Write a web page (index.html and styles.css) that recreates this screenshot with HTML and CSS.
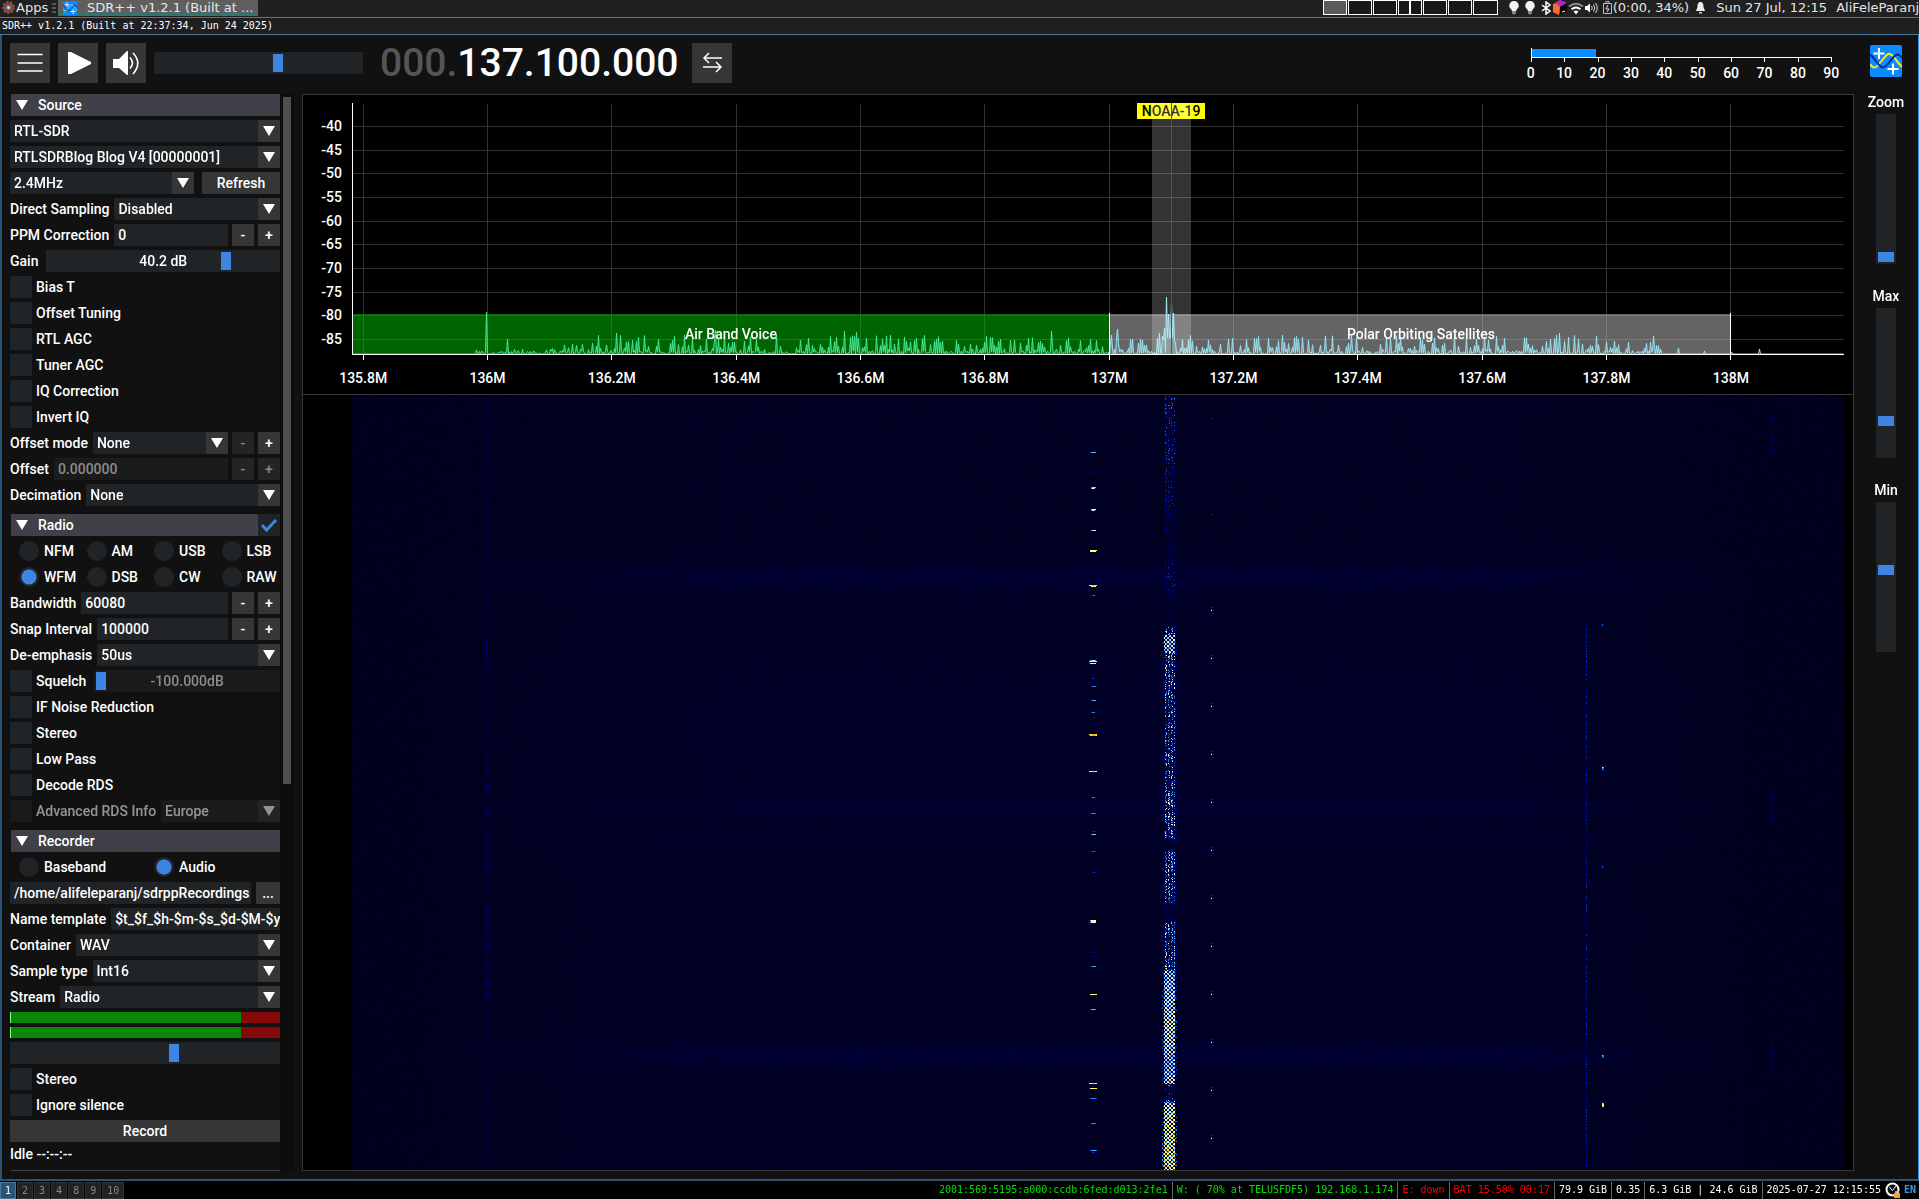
FILE: index.html
```html
<!DOCTYPE html>
<html lang="en">
<head>
<meta charset="utf-8">
<title>SDR++ v1.2.1</title>
<link rel="stylesheet" href="styles.css">
</head>
<body>
<svg class="defs" width="0" height="0" aria-hidden="true">
  <symbol id="sdrpp" viewBox="0 0 32 32">
    <rect width="32" height="32" rx="2" fill="#0a8bff"/>
    <path d="M0 19C2 22 4 23.500 6 22C10 19 14 12 18 9C22 7.500 26 16 32 22" fill="none" stroke="#ffe81a" stroke-width="2"/>
    <path d="M0 10C4 11 8 22 13 22.500C18 22 22 11 27 9.500Q30 9.500 32 13" fill="none" stroke="#0b2a8c" stroke-width="2"/>
    <path d="M9 3v11M3.500 8.500h11M23 18.500v11M17.500 24h11" stroke="#fff" stroke-width="2"/>
  </symbol>
  <symbol id="bulb" viewBox="0 0 12 15">
    <path d="M6 1a4.500 4.500 0 0 0-3 8l1 2h4l1-2a4.500 4.500 0 0 0-3-8z" fill="#f4f4f4"/>
    <path d="M4 11h4v2l-1 1.500H5L4 13z" fill="#8a8a8a"/>
  </symbol>
</svg>

<header class="panel">
  <button class="apps"><svg width="13" height="13" viewBox="0 0 13 13"><circle cx="6.500" cy="6.500" r="4" fill="#4a6f9a" stroke="#8a4a30" stroke-width="2.500"/><circle cx="6.500" cy="6.500" r="5.700" fill="none" stroke="#a05a3c" stroke-width="1.500" stroke-dasharray="2 2"/><circle cx="6.500" cy="6.500" r="1.500" fill="#cfe0f0"/></svg>Apps</button>
  <svg class="grip" width="4" height="10" viewBox="0 0 4 10"><path d="M0 1h4M0 5h4M0 9h4" stroke="#8c8c8c"/></svg>
  <button class="task"><svg width="16" height="14" preserveAspectRatio="none"><use href="#sdrpp" width="16" height="14"/></svg><span>SDR++ v1.2.1 (Built at ...</span></button>
  <div class="pager"><i class="on"></i><i></i><i></i><i class="split"></i><i></i><i></i><i class="wide"></i></div>
  <div class="tray">
    <svg width="15" height="15"><use href="#bulb" width="12" height="15"/></svg>
    <svg width="15" height="15"><use href="#bulb" width="12" height="15"/></svg>
    <svg width="12" height="14" viewBox="0 0 12 14"><path d="M2 4l8 6-4 3V1l4 3-8 6" fill="none" stroke="#fff" stroke-width="1.500"/></svg>
    <svg width="14" height="15" viewBox="0 0 14 15"><path d="M0 4L7 0l7 3-7 3-1 9-6-3z" fill="#f0323c"/><path d="M7 0l7 3-7 4-3-3z" fill="#b020e0"/><path d="M0 4l4 0 3 3-1 8-6-3z" fill="#ff6a2a"/><path d="M7 7l7-4v8l-7 4z" fill="#050505"/><path d="M9 12l3-1" stroke="#fff"/></svg>
    <svg width="16" height="14" viewBox="0 0 16 14"><path d="M1 5.500q7-5.500 14 0" fill="none" stroke="#8a8a8a" stroke-width="1.800"/><path d="M3.500 8.300q4.500-3.500 9 0" fill="none" stroke="#fff" stroke-width="1.800"/><path d="M5.500 10.500q2.500-2 5 0L8 13.500z" fill="#fff"/></svg>
    <svg width="13" height="14" viewBox="0 0 13 14"><path d="M0 5h2l3-2.500v9L2 9H0z" fill="#fff"/><path d="M6.500 5q1.500 2 0 4M8.500 3.500q2.500 3.500 0 7M10.500 2q3.500 5 0 10" fill="none" stroke="#ddd"/></svg>
    <svg class="battery" width="9" height="13" viewBox="0 0 9 13"><path d="M3 2V.5h3V2M.5 2.500h8v10h-8z" fill="none" stroke="#bbb"/><path d="M5 4L3 8h3l-2 3" fill="none" stroke="#ddd"/></svg>
    <span>(0:00, 34%)</span>
    <svg class="bell" width="11" height="13" viewBox="0 0 11 13"><path d="M5.500 1C3 1 2.500 3.500 2.500 6L1 10h9L8.500 6c0-2.500-.5-5-3-5z" fill="#eee"/><path d="M4 11h3v1.500H4z" fill="#ccc"/></svg>
    <span class="clock">Sun 27 Jul, 12:15</span>
    <span class="user">AliFeleParanj</span>
  </div>
</header>
<div class="titlebar">SDR++ v1.2.1 (Built at 22:37:34, Jun 24 2025)</div>

<main class="app">
  <div class="toolbar">
    <button class="tool" aria-label="Menu"><svg width="40" height="40" viewBox="0 0 40 40"><path d="M7.500 11.500h25M7.500 20h25M7.500 28h25" stroke="#fff" stroke-width="1.600"/></svg></button>
    <button class="tool" aria-label="Play"><svg width="40" height="40" viewBox="0 0 40 40"><path d="M10 9h3l20 10v2L13 31h-3z" fill="#fff"/></svg></button>
    <button class="tool" aria-label="Volume"><svg width="40" height="40" viewBox="0 0 40 40"><path d="M7 16h6l8-8h1v24h-1l-8-7H7z" fill="#fff"/><path d="M24 14.500q5 5.500 0 11M27 10q9.500 10 0 21" fill="none" stroke="#fff" stroke-width="1.600"/></svg></button>
    <input class="range volume" type="range" min="0" max="100" value="60" aria-label="Volume">
    <div class="freq"><span>000.</span>137.100.000</div>
    <button class="tool" aria-label="Tuning mode"><svg width="40" height="40" viewBox="0 0 40 40"><path d="M30 15H12M17 10l-5 5 5 5M11 24h18M24 19l5 5-5 5" fill="none" stroke="#fff" stroke-width="1.500"/></svg></button>
    <div class="smeter">
      <svg width="301" height="14" viewBox="0 0 301 14" shape-rendering="crispEdges"><path d="M0 1h65v8H0z" fill="#0a8bff"/><path d="M.5 0v14M0 9.500h301M33.500 9v5M67.500 9v5M100.500 9v5M133.500 9v5M167.500 9v5M200.500 9v5M233.500 9v5M267.500 9v5M300.500 9v5" fill="none" stroke="#fff"/></svg>
      <div class="smeter-scale"><span>0</span><span>10</span><span>20</span><span>30</span><span>40</span><span>50</span><span>60</span><span>70</span><span>80</span><span>90</span></div>
    </div>
    <svg class="logo" width="32" height="32"><use href="#sdrpp" width="32" height="32"/></svg>
  </div>

  <div class="body">
    <aside class="side">
      <div class="menu">
        <button class="head"><i class="tri"></i>Source</button>
        <div class="row"><div class="combo"><select aria-label="Source"><option>RTL-SDR</option></select></div></div>
        <div class="row"><div class="combo"><select aria-label="Device"><option>RTLSDRBlog Blog V4 [00000001]</option></select></div></div>
        <div class="row wide"><div class="combo"><select aria-label="Sample rate"><option>2.4MHz</option></select></div><button class="btn refresh">Refresh</button></div>
        <div class="row"><label for="ds">Direct Sampling</label><div class="combo"><select id="ds"><option>Disabled</option></select></div></div>
        <div class="row"><label for="ppm">PPM Correction</label><div class="spin"><input id="ppm" type="text" value="0"><button class="btn">-</button><button class="btn">+</button></div></div>
        <div class="row wide"><label for="gain">Gain</label><div class="slide"><input id="gain" class="range" type="range" min="0" max="1000" value="786"><output for="gain">40.2 dB</output></div></div>
        <label class="check"><input type="checkbox">Bias T</label>
        <label class="check"><input type="checkbox">Offset Tuning</label>
        <label class="check"><input type="checkbox">RTL AGC</label>
        <label class="check"><input type="checkbox">Tuner AGC</label>
        <label class="check"><input type="checkbox">IQ Correction</label>
        <label class="check"><input type="checkbox">Invert IQ</label>
        <div class="row"><label for="om">Offset mode</label><div class="spin"><div class="combo"><select id="om"><option>None</option></select></div><button class="btn" disabled>-</button><button class="btn">+</button></div></div>
        <div class="row"><label for="off">Offset</label><div class="spin"><input id="off" type="text" value="0.000000" disabled><button class="btn" disabled>-</button><button class="btn" disabled>+</button></div></div>
        <div class="row"><label for="dec">Decimation</label><div class="combo"><select id="dec"><option>None</option></select></div></div>

        <div class="head-row"><button class="head"><i class="tri"></i>Radio</button><label class="enable"><input type="checkbox" checked aria-label="Enable Radio"><svg width="22" height="22" viewBox="0 0 22 22"><path d="M4 11l4.500 5L18 6" fill="none" stroke="#3d85e0" stroke-width="3"/></svg></label></div>
        <div class="radios four">
          <label><input type="radio" name="mode">NFM</label><label><input type="radio" name="mode">AM</label><label><input type="radio" name="mode">USB</label><label><input type="radio" name="mode">LSB</label>
          <label><input type="radio" name="mode" checked>WFM</label><label><input type="radio" name="mode">DSB</label><label><input type="radio" name="mode">CW</label><label><input type="radio" name="mode">RAW</label>
        </div>
        <div class="row"><label for="bw">Bandwidth</label><div class="spin"><input id="bw" type="text" value="60080"><button class="btn">-</button><button class="btn">+</button></div></div>
        <div class="row"><label for="snap">Snap Interval</label><div class="spin"><input id="snap" type="text" value="100000"><button class="btn">-</button><button class="btn">+</button></div></div>
        <div class="row"><label for="de">De-emphasis</label><div class="combo"><select id="de"><option>50us</option></select></div></div>
        <div class="row wide"><label class="check"><input type="checkbox">Squelch</label><div class="slide off"><input class="range" type="range" min="-100" max="0" value="-100" aria-label="Squelch level"><output>-100.000dB</output></div></div>
        <label class="check"><input type="checkbox">IF Noise Reduction</label>
        <label class="check"><input type="checkbox">Stereo</label>
        <label class="check"><input type="checkbox">Low Pass</label>
        <label class="check"><input type="checkbox">Decode RDS</label>
        <div class="row dim"><label class="check"><input type="checkbox" disabled>Advanced RDS Info</label><div class="combo"><select aria-label="RDS region" disabled><option>Europe</option></select></div></div>

        <div class="head-row"><button class="head"><i class="tri"></i>Recorder</button></div>
        <div class="radios two"><label><input type="radio" name="rec">Baseband</label><label><input type="radio" name="rec" checked>Audio</label></div>
        <div class="row"><input type="text" value="/home/alifeleparanj/sdrppRecordings" aria-label="Recording folder"><button class="btn browse">...</button></div>
        <div class="row"><label for="tpl">Name template</label><input id="tpl" type="text" value="$t_$f_$h-$m-$s_$d-$M-$y"></div>
        <div class="row"><label for="con">Container</label><div class="combo"><select id="con"><option>WAV</option></select></div></div>
        <div class="row"><label for="st">Sample type</label><div class="combo"><select id="st"><option>Int16</option></select></div></div>
        <div class="row"><label for="str">Stream</label><div class="combo"><select id="str"><option>Radio</option></select></div></div>
        <div class="level"></div>
        <div class="level"></div>
        <input class="range" type="range" min="0" max="1000" value="613" aria-label="Recording volume">
        <label class="check"><input type="checkbox">Stereo</label>
        <label class="check"><input type="checkbox">Ignore silence</label>
        <button class="btn record">Record</button>
        <div class="status">Idle --:--:--</div>
        <div class="head-row"><button class="head" aria-label="Next section"></button></div>
      </div>
      <div class="scroll"><div class="thumb"></div></div>
    </aside>

    <section class="view">
      <div class="fft">
        <div class="ylabels"><span>-40</span><span>-45</span><span>-50</span><span>-55</span><span>-60</span><span>-65</span><span>-70</span><span>-75</span><span>-80</span><span>-85</span></div>
        <div class="plot">
          <canvas id="fft"></canvas>
          <span class="band air">Air Band Voice</span>
          <span class="band polar">Polar Orbiting Satellites</span>
          <span class="tag">NOAA-19</span>
          <div class="vfo"></div>
        </div>
      </div>
      <div class="xlabels"><span>135.8M</span><span>136M</span><span>136.2M</span><span>136.4M</span><span>136.6M</span><span>136.8M</span><span>137M</span><span>137.2M</span><span>137.4M</span><span>137.6M</span><span>137.8M</span><span>138M</span></div>
      <div class="fall"><canvas id="fall"></canvas></div>
    </section>

    <div class="levels">
      <label>Zoom<input class="vrange" type="range" min="0" max="100" value="0"></label>
      <label>Max<input class="vrange" type="range" min="0" max="100" value="22"></label>
      <label>Min<input class="vrange" type="range" min="0" max="100" value="55"></label>
    </div>
  </div>
</main>

<footer class="bar">
  <nav><button class="cur">1</button><button>2</button><button>3</button><button>4</button><button>8</button><button>9</button><button>10</button></nav>
  <div class="stat">
    <span class="ok">2001:569:5195:a000:ccdb:6fed:d013:2fe1</span><span class="ok">W: ( 70% at TELUSFDF5) 192.168.1.174</span><span class="bad">E: down</span><span class="bad">BAT 15.50% 00:17</span><span>79.9 GiB</span><span>0.35</span><span>6.3 GiB | 24.6 GiB</span><span>2025-07-27 12:15:55</span>
    <svg width="16" height="17" viewBox="0 0 16 17"><circle cx="7.500" cy="7.500" r="6" fill="#111" stroke="#fff" stroke-width="2"/><path d="M4.500 5l3 3.500L11 4" fill="none" stroke="#fff"/><path d="M9 11h6v5H9z" fill="#f5a623"/><path d="M10.500 11V9.500h3V11" fill="none" stroke="#f5a623"/></svg>
    <b>EN</b>
  </div>
</footer>
<script src="charts.js"></script>
</body>
</html>
```
FILE: styles.css
```css
* { box-sizing: border-box; }

body {
  margin: 0;
  height: 100vh;
  display: flex;
  flex-direction: column;
  overflow: hidden;
  background: #000;
  color: #fff;
  font: 500 14px/16px Roboto, sans-serif;
}

button, input, select { font: inherit; color: inherit; margin: 0; border: 0; border-radius: 0; }
button { padding: 0; }
.defs { position: absolute; }
svg { display: block; flex: none; }

/* desktop panel */
.panel {
  display: flex;
  align-items: flex-start;
  flex: none;
  height: 17px;
  background: #202020;
  font: 13px/15px "DejaVu Sans", sans-serif;
  color: #e6e6e6;
  white-space: nowrap;
}
.apps { display: flex; align-items: center; gap: 1px; padding-left: 2px; width: 52px; height: 15px; background: none; }
.grip { margin: 3px 2px 0 0; }
.task { display: flex; gap: 9px; width: 200px; height: 16px; padding: 1px 4px 0; background: #5f5f5f; border-bottom: 2px solid #2b7a72; line-height: 13px; }
.pager { display: flex; gap: 1px; margin-left: auto; margin-right: 10px; }
.pager i { width: 24px; height: 15px; border: 1px solid #fff; background: #181818; }
.pager .on { background: #5a5a5a; }
.pager .wide { width: 25px; }
.pager .split { background: linear-gradient(90deg, #181818 10px, #fff 10px 12px, #181818 12px); }
.tray { display: flex; align-items: center; gap: 1px; height: 15px; }
.battery { margin-left: 4px; }
.bell { margin: 0 9px 0 5px; }
.user { margin-left: 8px; }

.titlebar {
  flex: none;
  height: 18px;
  padding-left: 2px;
  border-top: 1px solid #4c7899;
  border-bottom: 1px solid #4c7899;
  background: #1f1f1f;
  font: 10px/15px "DejaVu Sans Mono", monospace;
}

/* application window */
.app {
  flex: 1;
  min-height: 0;
  display: flex;
  flex-direction: column;
  background: #111;
  border: solid #285577;
  border-width: 0 0 2px 2px;
  border-right: 1px solid #2e8fe0;
}
.toolbar { display: flex; align-items: flex-start; flex: none; gap: 8px; height: 59px; padding: 8px 16px 0 8px; }
.tool { width: 40px; height: 40px; background: #363636; }
.volume { width: 209px; margin-top: 9px; }
.freq { margin: 0 8px 0 9px; width: 296px; font-size: 39px; line-height: 40px; white-space: nowrap; }
.freq span { color: #555; }
.smeter { width: 334px; margin: 5px 14px 0 auto; }
.smeter svg { margin-left: 17px; }
.smeter-scale { display: grid; grid-template-columns: repeat(10, 1fr); margin-top: 3px; text-align: center; }
.logo { margin-top: 2px; }

.body { flex: 1; min-height: 0; display: flex; padding-bottom: 8px; }

/* side menu */
.side { display: flex; flex: none; width: 292px; overflow: hidden; }
.menu { display: flex; flex-direction: column; gap: 4px; width: 278px; padding-left: 8px; }
.menu > * { flex: none; }
.scroll { flex: 1; padding: 3px; background: #0c0c0c; }
.thumb { width: 8px; height: 687px; background: #4f4f4f; }

.head { display: flex; align-items: center; gap: 10px; flex: 1; height: 22px; margin-left: 1px; padding-left: 5px; background: #404048; text-align: left; }
.menu > .head { flex: none; }
.head-row { display: flex; height: 22px; margin-top: 4px; }
.tri { width: 12px; height: 10px; background: #fff; clip-path: polygon(0 0, 100% 0, 50% 100%); }
.enable { width: 22px; height: 22px; background: #212426; }
.enable input { position: absolute; opacity: 0; }

.row { display: flex; gap: 5px; height: 22px; align-items: center; }
.row.wide { gap: 8px; }
.row > label { white-space: nowrap; }
.combo { position: relative; flex: 1; min-width: 0; height: 22px; }
.combo::after {
  content: "";
  position: absolute;
  right: 5px;
  top: 6px;
  width: 12px;
  height: 10px;
  background: #fff;
  clip-path: polygon(0 0, 100% 0, 50% 100%);
  pointer-events: none;
}
select {
  appearance: none;
  width: 100%;
  height: 22px;
  padding: 0 22px 0 4px;
  background: linear-gradient(#363636, #363636) right / 22px 22px no-repeat #212426;
}
input[type="text"] { flex: 1; min-width: 0; width: 0; height: 22px; padding: 0 0 0 4px; background: #212426; }
.spin { display: flex; flex: 1; min-width: 0; gap: 4px; }
.btn { height: 22px; background: #363636; text-align: center; }
.spin .btn { width: 22px; }
.refresh { width: 78px; }
.browse { width: 24px; }
.spin input:disabled { background: #191b1c; color: #8c8c8c; opacity: 1; }
.btn:disabled { background: #242424; color: #8c8c8c; }

.check { display: flex; align-items: center; gap: 4px; height: 22px; }
.check input { appearance: none; width: 22px; height: 22px; background: #212426; }
.dim { opacity: .55; }
.dim select, .dim input { opacity: 1; color: #fff; }

.radios { display: grid; row-gap: 4px; }
.four { grid-template-columns: repeat(4, 1fr); }
.two { grid-template-columns: repeat(2, 1fr); }
.radios label { display: flex; align-items: center; gap: 5px; height: 22px; padding-left: 9px; }
.radios input { appearance: none; flex: none; width: 20px; height: 20px; border-radius: 50%; background: #212426; }
.radios input:checked { background: radial-gradient(circle, #3d85e0 7px, #212426 8px); }

.range { appearance: none; display: block; height: 22px; padding: 0 2px; background: #212426; }
.range::-webkit-slider-thumb { appearance: none; width: 10px; height: 18px; background: #3d85e0; }
.slide { position: relative; flex: 1; min-width: 0; height: 22px; }
.slide .range { width: 100%; }
.slide output { position: absolute; inset: 3px 0 0; text-align: center; pointer-events: none; }
.off .range { background: #191b1c; }
.off output { color: #8c8c8c; }
.level { height: 11px; background: linear-gradient(90deg, #8f8 1px, #0a880a 1px 231px, #870a0a 231px); }

/* spectrum and waterfall */
.view { flex: 1; min-width: 0; display: flex; flex-direction: column; margin: 0 0 0 8px; border: 1px solid #383838; background: #000; }
.fft { display: flex; flex: none; height: 266px; padding: 8px 9px 0 0; }
.ylabels { display: grid; grid-template-rows: repeat(10, 1fr); align-items: center; width: 49px; height: 237px; margin-top: 11px; padding-right: 10px; text-align: right; }
.plot { position: relative; flex: 1; min-width: 0; }
canvas { display: block; width: 100%; height: 100%; }
.band { position: absolute; top: 223px; text-align: center; }
.air { left: 0; width: 50.8%; }
.polar { left: 50.8%; width: 41.7%; }
.tag { position: absolute; left: calc(54.9% - 34px); top: 0; width: 68px; background: #ff0; color: #000; text-align: center; }
.vfo { position: absolute; left: 53.6%; top: 0; width: 39px; height: 251px; background: linear-gradient(90deg, transparent 19px, #e01818 19px 20px, transparent 20px), rgba(255, 255, 255, .2); }
.xlabels { display: grid; grid-template-columns: repeat(12, 1fr); flex: none; height: 33px; margin: 0 60px 0 -2px; padding-top: 9px; text-align: center; }
.fall { flex: 1; min-height: 0; padding: 0 9px 0 49px; border-top: 1px solid #383838; }

.levels { display: flex; flex-direction: column; gap: 24px; flex: none; width: 64px; }
.levels label { display: flex; flex-direction: column; align-items: center; gap: 4px; }
.vrange { appearance: none; writing-mode: vertical-lr; direction: rtl; width: 20px; height: 150px; padding: 2px 0; background: #212426; }
.vrange::-webkit-slider-thumb { appearance: none; width: 16px; height: 10px; background: #3d85e0; }

/* workspace bar */
.bar { display: flex; flex: none; height: 18px; padding-top: 1px; background: #000; font: 10px/16px "DejaVu Sans Mono", monospace; }
.bar nav { display: flex; gap: 1px; }
.bar button { min-width: 16px; height: 17px; padding: 0 4px; border: 1px solid #333; background: #222; color: #888; line-height: 15px; }
.bar .cur { border-color: #4c7899; background: #285577; color: #fff; }
.stat { display: flex; margin-left: auto; padding-right: 3px; white-space: pre; }
.stat span + span { margin-left: 4px; padding-left: 4px; border-left: 1px solid #666; }
.stat svg { margin: 0 3px 0 4px; }
.ok { color: #00e000; }
.bad { color: #f00; }
.stat b { color: #3d9be0; font: bold 10px/16px "DejaVu Sans Mono", monospace; }
```
FILE: charts.js
```js
const SPAN = 1492; // reference bin count across 2.4 MHz
let seed = 7;
const rnd = () => {
  seed = (seed * 1664525 + 1013904223) >>> 0;
  return seed / 4294967296;
};

function prepare(id) {
  const c = document.getElementById(id);
  const r = c.getBoundingClientRect();
  c.width = Math.round(r.width);
  c.height = Math.round(r.height);
  return [c.getContext('2d'), c.width, c.height];
}

function drawSpectrum() {
  seed = 11;
  const [g, w, h] = prepare('fft');
  const base = 251;
  const k = w / SPAN;
  const fx = f => Math.round((f - 135.7828) / 2.4 * w);
  const band = (a, b, col) => { g.fillStyle = col; g.fillRect(a, base - 40, b - a, 40); };
  const m137 = fx(137), m138 = fx(138);
  band(0, m137, '#006400');
  band(m137, m138, '#646464');
  const grid = (x, y, ww, hh, inBand) => {
    g.fillStyle = inBand || '#323232';
    g.fillRect(x, y, ww, hh);
  };
  for (let i = 0; i < 12; i++) {
    const x = fx(135.8 + i * 0.2);
    grid(x, 1, 1, base - 41);
    grid(x, base - 40, 1, 40, x < m137 ? '#1e781e' : '#7c7c7c');
    g.fillStyle = '#fff';
    g.fillRect(x, base, 1, 6);
  }
  for (let i = 0; i < 10; i++) {
    const y = Math.round(23 + i * 23.65);
    grid(0, y, w, 1);
    if (y > base - 40) {
      grid(0, y, m137, 1, '#1e781e');
      grid(m137, y, m138 - m137, 1, '#7c7c7c');
    }
  }
  const env = x => {
    if (x < 120) return 0;
    if (x < 180) return 7;
    if (x < 240) return 13;
    if (x < 1270) return 21;
    if (x < 1312) return 14;
    return 0;
  };
  const spikes = { 135: 42, 156: 15, 265: 21, 364: 24, 493: 23, 505: 22, 700: 23, 760: 19, 766: 25, 812: 14, 806: 16, 808: 21, 811: 18, 813: 26, 815: 57, 817: 40, 820: 53, 822: 41, 824: 12, 974: 18, 1000: 19, 1208: 21, 1302: 18, 1327: 6, 1353: 3, 1380: 2, 1408: 5 };
  const ys = [];
  for (let x = 0; x < SPAN; x++) {
    let v = x % 2 ? Math.pow(rnd(), 1.7) * env(x) - 2 : rnd() * 4 - 1;
    if (!env(x)) v = 0;
    if (x >= 816 && x <= 821 && !spikes[x]) v = 16;
    if (spikes[x]) v = spikes[x];
    ys.push(Math.max(0, v));
  }
  const trace = (a, b, line, fill) => {
    g.beginPath();
    g.moveTo(a * k, base);
    for (let x = a; x <= b; x++) g.lineTo(Math.max(0, x * k - 0.5), base - ys[x]);
    g.lineTo(b * k, base);
    g.fillStyle = fill;
    g.fill();
    g.strokeStyle = line;
    g.lineWidth = 1;
    g.stroke();
  };
  trace(0, 757, '#45e896', 'rgba(60,200,120,.25)');
  trace(757, SPAN - 1, '#9ae4f2', 'rgba(150,225,240,.25)');
  g.fillStyle = '#fff';
  g.fillRect(0, 0, 1, base);
  g.fillRect(m137, base - 41, 1, 41);
  g.fillRect(m138, base - 41, 1, 41);
  g.fillRect(0, base, w, 1);
}

const MAP = [[0, 0, 32], [0, 0, 48], [0, 0, 80], [0, 0, 145], [30, 144, 255], [255, 255, 255], [255, 255, 0], [254, 109, 22]];
function shade(v) {
  v = Math.max(0, Math.min(0.999, v)) * (MAP.length - 1);
  const i = Math.floor(v), t = v - i;
  return MAP[i].map((c, n) => Math.round(c + (MAP[i + 1][n] - c) * t));
}

// signal strength of the satellite downlink by waterfall row
const PASS = [[0, .48], [60, .46], [110, .4], [150, .34], [185, .44], [196, .42], [206, .14], [226, .14], [232, .56], [240, .66], [252, .7], [262, .62], [330, .58], [390, .6], [410, .62], [440, .64], [446, .3], [453, .3], [457, .62], [505, .58], [512, .32], [523, .32], [528, .6], [560, .62], [580, .67], [620, .76], [650, .74], [660, .66], [688, .7], [692, .4], [702, .45], [708, .7], [718, .8], [775, .84]];
function passAt(y) {
  for (let i = 1; i < PASS.length; i++) {
    if (y <= PASS[i][0]) {
      const [a, u] = PASS[i - 1], [b, v] = PASS[i];
      return u + (v - u) * (y - a) / (b - a);
    }
  }
  return .84;
}

function drawWaterfall() {
  seed = 5;
  const [g, w, h] = prepare('fall');
  const k = w / SPAN;
  const img = g.createImageData(w, h);
  const put = (x, y, v) => {
    x = Math.round(x); y = Math.round(y);
    if (x < 0 || y < 0 || x >= w || y >= h) return;
    const c = shade(v), o = (y * w + x) * 4;
    img.data[o] = c[0]; img.data[o + 1] = c[1]; img.data[o + 2] = c[2]; img.data[o + 3] = 255;
  };
  const bump = (y, c, s) => Math.exp(-((y - c) * (y - c)) / (2 * s * s));
  for (let y = 0; y < h; y++) {
    const glow = .55 * bump(y, 182, 10) + .55 * bump(y, 660, 9) + .14 * bump(y, 340, 50) + .3 * bump(y, 412, 7) + .2 * bump(y, 445, 6) + (y > 200 ? .1 : 0);
    for (let x = 0; x < w; x++) {
      const q = x / k;
      const hump = Math.max(0, Math.min(1, (q - 60) / 350)) * Math.max(0, Math.min(1, (1400 - q) / 250));
      const n = rnd();
      const b = 29 + (glow * 32 + 3) * hump * (.4 + n) + n * 3;
      const o = (y * w + x) * 4;
      img.data[o + 2] = b; img.data[o + 3] = 255;
    }
    const on = (y > 240 && y < 270) || (y > 350 && y < 480) || (y > 510 && y < 600);
    if (rnd() > .5) put(134 * k, y, on ? .42 : .26);
    if (y > 225 && rnd() > .2) put(1234 * k, y, .25 + .25 * rnd());
    if (y > 225 && rnd() > .7) { put(1231 * k, y, .22); put(1237 * k, y, .22); }
    const late = (y > 20 && y < 60) || (y > 395 && y < 430) || (y > 640 && y < 680);
    if (late && rnd() > .4) put(1420 * k, y, .36);
    const p = passAt(y);
    const cx = Math.round(817 * k);
    for (let d = -7; d <= 7; d++) {
      const inner = d >= -5 && d <= 5;
      const stripe = [-4, -3, -1, 0, 2, 3, 5].includes(d);
      const check = ((Math.floor(y / 2) + Math.floor((d + 8) / 2)) & 1) === 0;
      const n = rnd();
      let v = 0;
      if (p > .655 && inner) v = check ? p * (.85 + .25 * n) : n > .7 ? p * .7 : .1;
      else if (stripe) v = n > (p > .5 ? .38 : .6) ? p * (.45 + .75 * rnd()) : .12;
      else if (Math.abs(d) >= 6 && check && p > .5 && n > .6) v = p * .7;
      if (v > .08) put(cx + d, y, v);
    }
  }
  const dash = (y, n, v) => { for (let i = 0; i < n; i++) put((741 * k) + i - n / 2, y, v - Math.abs(i - n / 2) / n * .25); };
  const hits = [[22, 5, .35], [57, 6, .65], [77, 6, .4], [92, 5, .7], [93, 4, .75], [105, 4, .4], [114, 5, .78], [115, 4, .7], [135, 5, .72], [155, 7, .85], [156, 6, .8], [176, 4, .4], [190, 8, .95], [191, 5, .86], [200, 3, .6], [265, 6, .7], [266, 8, .9], [268, 6, .86], [283, 4, .5], [291, 5, .6], [305, 5, .65], [317, 4, .6], [322, 3, .5], [339, 8, .96], [340, 7, .97], [376, 8, .9], [402, 4, .6], [418, 6, .6], [436, 5, .5], [439, 5, .68], [456, 6, .55], [477, 5, .5], [525, 6, .8], [526, 5, .86], [527, 6, .75], [557, 5, .45], [561, 4, .45], [571, 5, .65], [599, 7, .84], [614, 6, .65], [688, 8, .92], [693, 7, .86], [703, 8, .6], [728, 6, .6], [755, 7, .64], [757, 4, .5]];
  hits.forEach(t => dash(...t));
  for (const y of [23, 119, 215, 263, 311, 359, 407, 455, 503, 551, 599, 647, 695, 743]) {
    put(859 * k, y, y < 200 ? .5 : .75);
    if (y < 200) continue;
    put(859 * k, y - 3, .5);
    put(859 * k - 1, y - 2, .4);
    put(859 * k, y - 1, .45);
  }
  for (const [y, v] of [[230, .55], [373, .7], [374, .6], [472, .55], [661, .65], [709, .7], [710, .8]]) {
    for (let i = 0; i < 3; i++) {
      put(1250 * k, y + i - 1, v - i * .08);
      put(1250 * k + 1, y + i - 1, v - .12);
    }
  }
  g.putImageData(img, 0, 0);
}

function draw() { drawSpectrum(); drawWaterfall(); }
draw();
window.addEventListener('resize', draw);
```
